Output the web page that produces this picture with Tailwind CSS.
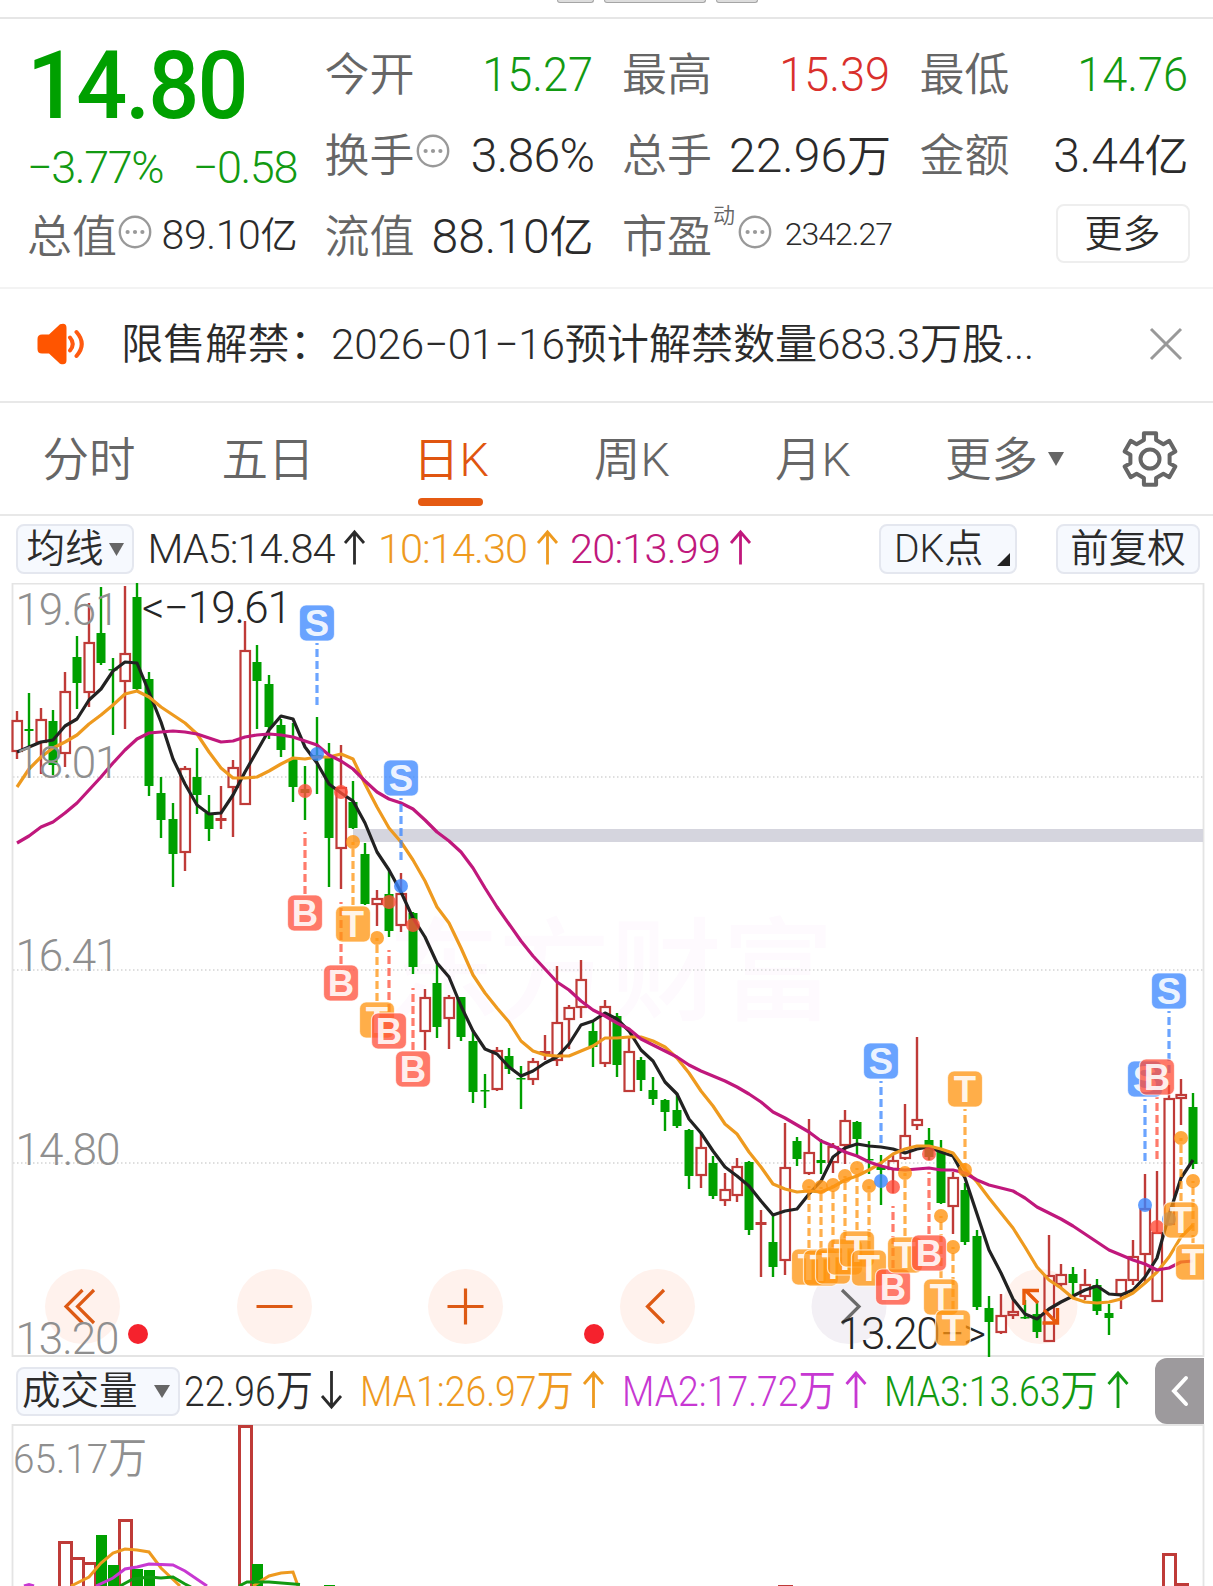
<!DOCTYPE html>
<html lang="zh-CN">
<head>
  <meta charset="UTF-8" />
  <title>日K</title>
  <script src="https://cdn.jsdelivr.net/npm/@tailwindcss/browser@4"></script>
</head>
<body class="bg-white w-[1213px] h-[1586px] overflow-hidden font-['Roboto','Noto_Sans_CJK_SC',sans-serif] font-[350] text-[#2b2b2b]">
  <!-- bottom edge of the index chips -->
  <div class="h-[19px] border-b-2 border-[#e6e6e6] flex gap-[10px] pl-[557px] overflow-hidden">
    <div class="w-[37px] h-[3px] rounded-b-md bg-[#dddddd] border border-t-0 border-[#a5a5a5]"></div>
    <div class="w-[102px] h-[3px] rounded-b-md bg-[#dddddd] border border-t-0 border-[#a5a5a5]"></div>
    <div class="w-[42px] h-[3px] rounded-b-md bg-[#dddddd] border border-t-0 border-[#a5a5a5]"></div>
  </div>

  <!-- quote header -->
  <section class="h-[270px] border-b-2 border-[#f3f3f3] pt-[14px] pl-[27px] grid grid-cols-[repeat(4,270px)] grid-rows-[repeat(3,81px)] gap-x-[27.5px] items-center whitespace-nowrap leading-none">
    <div class="row-span-2 h-full text-[#00a000]">
      <div class="pt-[5px] text-[95px] font-medium tracking-[-2px] origin-left scale-x-[0.945]">14.80</div>
      <div class="mt-[12px] flex justify-between text-[45px] tracking-[-1.4px] text-[#129a12]"><span>−3.77%</span><span>−0.58</span></div>
    </div>
    <div class="flex justify-between items-center"><span class="pt-[4px] text-[45px] text-[#666]">今开</span><span class="text-[48px] origin-right scale-x-[0.94] pr-[2px] pt-[2px] text-[#129a12]">15.27</span></div>
    <div class="flex justify-between items-center"><span class="pt-[4px] text-[45px] text-[#666]">最高</span><span class="text-[48px] origin-right scale-x-[0.94] pr-[2px] pt-[2px] text-[#d9302c]">15.39</span></div>
    <div class="flex justify-between items-center"><span class="pt-[4px] text-[45px] text-[#666]">最低</span><span class="text-[48px] origin-right scale-x-[0.94] pr-[2px] pt-[2px] text-[#129a12]">14.76</span></div>

    <div class="flex justify-between items-center">
      <span class="pt-[4px] flex items-center text-[45px] text-[#666]">换手
        <svg class="w-[36px] h-[36px] -mt-[12px]" viewBox="0 0 36 36"><circle cx="18" cy="18" r="15.2" fill="none" stroke="#999" stroke-width="2.4"/><g fill="#999"><circle cx="10.6" cy="18" r="2.1"/><circle cx="18" cy="18" r="2.1"/><circle cx="25.4" cy="18" r="2.1"/></g></svg></span>
      <span class="text-[48px] pt-[2px] tracking-[-0.6px]">3.86%</span>
    </div>
    <div class="flex justify-between items-center"><span class="pt-[4px] text-[45px] text-[#666]">总手</span><span class="text-[48px] pr-px pt-[2px]">22.96<span class="text-[44px]">万</span></span></div>
    <div class="flex justify-between items-center"><span class="pt-[4px] text-[45px] text-[#666]">金额</span><span class="text-[48px] pr-px pt-[2px]">3.44<span class="text-[44px]">亿</span></span></div>

    <div class="flex justify-between items-center">
      <span class="pt-[4px] flex items-center text-[45px] text-[#666]">总值
        <svg class="w-[36px] h-[36px] -mt-[12px]" viewBox="0 0 36 36"><circle cx="18" cy="18" r="15.2" fill="none" stroke="#999" stroke-width="2.4"/><g fill="#999"><circle cx="10.6" cy="18" r="2.1"/><circle cx="18" cy="18" r="2.1"/><circle cx="25.4" cy="18" r="2.1"/></g></svg></span>
      <span class="text-[41px] tracking-[-0.4px]">89.10<span class="text-[37px]">亿</span></span>
    </div>
    <div class="flex justify-between items-center"><span class="pt-[4px] text-[45px] text-[#666]">流值</span><span class="text-[48px] pr-px pt-[2px]">88.10<span class="text-[44px]">亿</span></span></div>
    <div class="flex justify-between items-center">
      <span class="pt-[4px] flex items-center text-[45px] text-[#666]">市盈<span class="ml-px text-[22px] -mt-[44px]">动</span>
        <svg class="ml-[2px] w-[36px] h-[36px] -mt-[12px]" viewBox="0 0 36 36"><circle cx="18" cy="18" r="15.2" fill="none" stroke="#999" stroke-width="2.4"/><g fill="#999"><circle cx="10.6" cy="18" r="2.1"/><circle cx="18" cy="18" r="2.1"/><circle cx="25.4" cy="18" r="2.1"/></g></svg></span>
      <span class="text-[32px] -mt-[3px] tracking-[-1px]">2342.27</span>
    </div>
    <button class="justify-self-end w-[134px] h-[59px] -mt-[4px] border-2 border-[#eeeeee] rounded-lg text-[38px] font-[350] leading-none">更多</button>
  </section>

  <!-- announcement -->
  <section class="h-[114px] border-b-2 border-[#e8e8e8] flex items-center pl-[36px] pr-[30px] pb-[2px] whitespace-nowrap leading-none">
    <svg class="w-[50px] h-[42px]" viewBox="36 323 50 42"><path d="M42 334.500h7l11-10.300q6.500-2 6.500 3.500v32.500q0 5.500-6.500 3.500l-11-10.200h-7q-4.500 0-4.500-4.500v-10q0-4.500 4.500-4.500z" fill="#ff5500"/><path d="M70 337.500q5.500 6.500 0 13M76.500 332q10.500 12 0 24" fill="none" stroke="#ff5a10" stroke-width="4" stroke-linecap="round"/></svg>
    <span class="ml-[35px] pt-[2px] text-[42.2px]">限售解禁：</span><span class="pt-[2px] -ml-px text-[42.2px] tracking-[-0.15px]">2026−01−16预计解禁数量683.3万股...</span>
    <svg class="ml-auto w-[34px] h-[34px]" viewBox="0 0 34 34"><path d="M2 2l30 30M32 2L2 32" stroke="#999" stroke-width="3" fill="none"/></svg>
  </section>

  <!-- period tabs -->
  <nav class="h-[113px] border-b-2 border-[#e8e8e8] flex items-center whitespace-nowrap leading-none text-[46.5px] text-[#666]">
    <span class="pt-[4px] w-[178px] text-center">分时</span>
    <span class="pt-[4px] w-[180px] text-center">五日</span>
    <span class="relative pt-[4px] w-[186px] text-center text-[#e05510]">日K<i class="absolute left-[60px] top-[65px] w-[65px] h-[8px] rounded-full bg-[#e55a12]"></i></span>
    <span class="pt-[4px] w-[176px] text-center">周K</span>
    <span class="pt-[4px] w-[186px] text-center">月K</span>
    <span class="pt-[4px] ml-[39px]">更多</span>
    <svg class="ml-[10px] w-[16px] h-[14px]" viewBox="0 0 16 14"><path d="M0 0h16L8 14z" fill="#666"/></svg>
    <svg class="ml-[56px] w-[60px] h-[60px]" viewBox="-30 -30 60 60" fill="none" stroke="#666" stroke-width="4"><path id="gear" stroke-linejoin="round"/><circle r="9.500"/></svg>
  </nav>

  <!-- moving averages row -->
  <section class="h-[67px] flex items-center pl-[16px] pb-px whitespace-nowrap leading-none text-[41px]">
    <button class="w-[118px] h-[50px] flex items-center justify-center gap-[5px] rounded-lg border-2 border-[#e4e7ef] bg-[#f6f9fe] text-[38.500px] font-[350]">均线<svg class="w-[15px] h-[13px]" viewBox="0 0 15 13"><path d="M0 0h15L7.500 13z" fill="#666"/></svg></button>
    <svg class="w-[620px] h-[60px] ml-[14px]" viewBox="148 520 620 60">
      <g font-size="41.500">
        <text x="147.500" y="563.500" textLength="188" fill="#2b2b2b">MA5:14.84</text>
        <text x="378" y="563.500" textLength="150" fill="#ee9a1f">10:14.30</text>
        <text x="570" y="563.500" textLength="151" fill="#c0187c">20:13.99</text>
      </g>
      <g fill="none" stroke-width="2.800"><path d="M354.500 565.500v-32M345 544l9.500-11 9.500 11" stroke="#2b2b2b"/><path d="M547.500 565.500v-32M538 544l9.500-11 9.500 11" stroke="#ee9a1f"/><path d="M740.500 565.500v-32M731 544l9.500-11 9.500 11" stroke="#c0187c"/></g>
    </svg>
    <button class="ml-[111px] w-[138px] h-[50px] relative rounded-lg border-2 border-[#e4e7ef] bg-[#f6f9fe] text-[39px] font-[350] text-left pl-[13px] leading-none">DK点<svg class="absolute right-[5px] bottom-[6px] w-[13px] h-[13px]" viewBox="0 0 13 13"><path d="M13 0v13H0z" fill="#222"/></svg></button>
    <button class="ml-[39px] w-[144px] h-[50px] rounded-lg border-2 border-[#e4e7ef] bg-[#f6f9fe] text-[38.500px] font-[350] leading-none">前复权</button>
  </section>

  <svg id="kline" class="block w-[1213px] h-[775px]" viewBox="0 583 1213 775"></svg>

  <!-- volume row -->
  <section class="h-[66px] flex items-center pl-[16px] whitespace-nowrap leading-none">
    <button class="w-[164px] h-[49px] flex items-center pl-[4px] rounded-lg border-2 border-[#e4e7ef] bg-[#f6f9fe] text-[38.500px] font-[350]">成交量<svg class="ml-[16px] w-[16px] h-[13px]" viewBox="0 0 16 13"><path d="M0 0h16L8 13z" fill="#666"/></svg></button>
    <svg class="w-[975px] h-[66px]" viewBox="180 1358 975 66">
      <g font-size="43">
        <text x="184" y="1406" textLength="129" lengthAdjust="spacingAndGlyphs" fill="#2b2b2b">22.96万</text>
        <text x="360" y="1406" textLength="214" lengthAdjust="spacingAndGlyphs" fill="#ee9a1f">MA1:26.97万</text>
        <text x="622" y="1406" textLength="214" lengthAdjust="spacingAndGlyphs" fill="#c738d2">MA2:17.72万</text>
        <text x="884" y="1406" textLength="214" lengthAdjust="spacingAndGlyphs" fill="#129a12">MA3:13.63万</text>
      </g>
      <g fill="none" stroke-width="2.800"><path d="M331.500 1371v35M322 1396l9.500 11 9.500-11" stroke="#2b2b2b"/><path d="M593.500 1408v-35M584 1384l9.500-11 9.500 11" stroke="#ee9a1f"/><path d="M856 1408v-35M846.500 1384l9.500-11 9.500 11" stroke="#c738d2"/><path d="M1118 1408v-35M1108.500 1384l9.500-11 9.500 11" stroke="#129a12"/></g>
    </svg>
    <div class="w-[49px] h-[66px] rounded-l-xl bg-[#9d9a9d] flex items-center pl-[15px]"><svg class="w-[20px] h-[32px]" viewBox="0 0 20 32"><path d="M16 3L4 16l12 13" fill="none" stroke="#fff" stroke-width="4" stroke-linecap="round"/></svg></div>
  </section>

  <svg id="volume" class="block w-[1213px] h-[162px]" viewBox="0 1424 1213 162"></svg>

  <script>
    const RED = "#bf3b38", GREEN = "#00a000";
    const X = i => 17 + 12 * i;

    // direction, high, low, body top, body bottom
    const candles = [
      ["r",711,759,720,752],["g",693,747,729,731],["r",708,774,719,743],["g",710,775,721,765],["r",672,767,691,754],
      ["g",636,709,657,683],["r",603,707,642,693],["g",587,665,633,663],["g",658,735,669,670],["r",586,729,653,682],
      ["g",583,690,597,689],["g",672,796,679,786],["g",777,838,793,820],["g",803,887,819,854],["r",766,871,768,853],
      ["g",748,814,777,795],["g",795,841,813,829],["r",786,829,818,821],["r",760,837,767,788],["r",621,805,650,805],
      ["g",645,729,662,681],["g",675,739,684,727],["g",719,757,725,750],["g",723,802,759,787],["g",766,820,789,793],
      ["g",717,794,755,756],["g",743,887,758,838],["r",745,889,787,849],["g",781,829,802,828],["g",843,905,854,904],
      ["r",890,926,898,905],["g",871,937,894,931],["r",873,932,893,926],["g",912,974,913,967],["r",989,1050,997,1032],
      ["g",963,1038,983,1027],["r",995,1049,997,1019],["g",997,1041,997,1037],["g",1030,1103,1041,1092],["g",1074,1108,1090,1091],
      ["r",1047,1091,1050,1090],["g",1048,1074,1056,1069],["g",1066,1109,1078,1079],["r",1058,1085,1061,1080],["r",1035,1060,1051,1054],
      ["r",966,1066,1022,1061],["r",1005,1049,1007,1020],["r",960,1018,979,1008],["g",1022,1067,1031,1047],["r",1000,1067,1006,1064],
      ["g",1013,1077,1016,1065],["r",1038,1092,1051,1092],["g",1057,1091,1060,1080],["g",1077,1105,1090,1099],["g",1099,1131,1100,1112],
      ["g",1093,1128,1110,1126],["g",1129,1189,1130,1176],["r",1133,1188,1147,1176],["g",1156,1199,1163,1196],["r",1173,1206,1189,1201],
      ["r",1158,1202,1166,1196],["g",1161,1235,1162,1230],["r",1210,1277,1222,1225],["g",1215,1277,1242,1267],["r",1123,1275,1167,1261],
      ["g",1137,1166,1141,1159],["r",1119,1175,1152,1174],["g",1139,1174,1160,1163],["r",1143,1173,1146,1163],["r",1110,1164,1120,1146],
      ["g",1121,1155,1122,1139],["g",1141,1174,1159,1160],["g",1155,1205,1166,1170],["r",1155,1193,1160,1170],["r",1104,1160,1135,1159],
      ["r",1037,1130,1119,1126],["g",1128,1160,1140,1157],["g",1140,1204,1150,1203],["r",1172,1234,1177,1207],["g",1183,1245,1190,1242],
      ["g",1230,1310,1236,1307],["g",1296,1357,1308,1322],["r",1294,1334,1315,1333],["r",1300,1319,1311,1316],["g",1300,1319,1317,1318],
      ["g",1302,1338,1314,1332],["r",1235,1342,1275,1342],["r",1264,1288,1274,1285],["g",1267,1297,1274,1283],["r",1269,1300,1284,1297],
      ["g",1279,1315,1285,1311],["g",1304,1335,1313,1318],["r",1279,1309,1279,1295],["r",1240,1285,1256,1281],["r",1174,1282,1208,1255],
      ["r",1171,1302,1232,1302],["r",1085,1225,1098,1225],["r",1079,1125,1094,1099],["g",1093,1169,1107,1164]
    ];
    const ma5 = [752,747,742,740,726,719,700,689,671,662,663,692,722,759,784,805,814,813,795,772,751,730,716,719,747,763,784,793,801,823,852,870,892,918,937,963,977,1006,1031,1049,1054,1067,1076,1071,1063,1057,1044,1025,1021,1013,1019,1031,1050,1061,1082,1094,1119,1133,1151,1167,1176,1186,1201,1215,1211,1209,1194,1181,1157,1148,1144,1146,1147,1149,1153,1149,1147,1152,1156,1178,1214,1250,1273,1299,1314,1319,1309,1302,1296,1290,1286,1294,1295,1290,1277,1258,1215,1178,1160];
    const ma10 = [787,769,757,748,742,735,724,715,705,694,691,697,707,715,723,734,752,768,778,778,777,771,764,758,759,757,757,754,759,784,807,828,842,860,881,907,923,948,975,993,1008,1022,1041,1051,1055,1056,1056,1051,1046,1038,1038,1037,1037,1041,1047,1058,1073,1091,1106,1124,1134,1152,1167,1184,1189,1192,1191,1192,1187,1180,1176,1170,1163,1154,1149,1146,1146,1149,1153,1169,1182,1198,1213,1228,1247,1267,1280,1288,1298,1302,1303,1302,1299,1293,1283,1272,1257,1237,1225];
    const ma20 = [843,836,827,822,813,803,790,777,763,750,739,733,732,731,732,734,738,742,741,737,735,734,735,737,741,745,755,761,769,781,792,799,803,809,820,832,841,852,868,888,907,924,941,956,969,982,990,1001,1010,1016,1023,1029,1039,1045,1051,1057,1065,1071,1076,1081,1087,1094,1102,1112,1118,1125,1132,1141,1146,1152,1156,1162,1166,1169,1170,1169,1168,1170,1170,1173,1180,1185,1188,1191,1198,1207,1213,1219,1226,1234,1242,1250,1255,1260,1264,1270,1268,1262,1261];

    // letter, candle index, badge centre, dot centre
    const marks = [
      ["S",25,623,754],["S",32,778,886],["B",24,913,791],["T",28,924,842],["B",27,983,792],["T",30,1020,938],["B",31,1031,902],["B",33,1069,925],
      ["T",66,1267,1186],["T",67,1268,1187],["T",68,1266,1185],["T",69,1257,1176],["T",70,1249,1168],["T",71,1268,1186],
      ["S",72,1061,1181],["B",73,1287,1187],["T",74,1255,1173],["B",76,1253,1154],["T",77,1297,1216],["T",78,1328,1247],["T",79,1089,1170],
      ["S",94,1079,1205],["S",96,991,1219],["B",95,1077,1227],["T",97,1220,1138],["T",98,1262,1181]
    ];
    const tone = { S: "#3a86ff", B: "#ff4f3a", T: "#ff9410" };

    const line = (d, c) => `<polyline points="${d.map((y, i) => X(i) + "," + y).join(" ")}" fill="none" stroke="${c}" stroke-width="3.200" stroke-linejoin="round"/>`;

    let s = "";
    s += `<g fill="#fefafe" font-size="112" font-weight="500"><text x="388 498 610 722" y="1012">东方财富</text></g>`;
    s += `<path d="M13 777H1203M13 970H1203M13 1163H1203" stroke="#d4d4d4" stroke-width="1.300" stroke-dasharray="1.500 2.500"/>`;
    s += `<path d="M12.500 583.500H1203.500V1356H12.500z" fill="none" stroke="#e4e4e4" stroke-width="1.800"/>`;
    s += `<rect x="353" y="829" width="850" height="13" fill="#d5d5de"/>`;

    // round tool buttons
    for (const x of [82.5, 274.5, 465.5, 657.5, 1040]) s += `<circle cx="${x}" cy="1306.500" r="37.500" fill="#fff2ed"/>`;
    s += `<circle cx="849" cy="1306.500" r="37.500" fill="#f3f0f5"/>`;
    s += `<g fill="none" stroke="#dd5a14" stroke-width="3.200"><path d="M82.500 1290L66 1306.500 82.500 1323M94 1290l-16.500 16.500L94 1323M256.500 1306.500h36M447.500 1306.500h36M465.500 1288.500v36M664 1290l-16.500 16.500L664 1323"/></g>`;
    s += `<path d="M842 1290l17 16.500-17 17" fill="none" stroke="#6b6b6b" stroke-width="3.200"/>`;

    candles.forEach(([k, hi, lo, t, b], i) => {
      const x = X(i);
      if (k === "g") {
        s += `<path d="M${x} ${hi}V${lo}" stroke="${GREEN}" stroke-width="2.400"/><rect x="${x - 4.5}" y="${t}" width="9" height="${Math.max(b - t, 1.5)}" fill="${GREEN}"/>`;
      } else if (b - t < 4) {
        s += `<path d="M${x} ${hi}V${lo}" stroke="${RED}" stroke-width="2.400"/><rect x="${x - 5.5}" y="${t}" width="11" height="${b - t}" fill="${RED}"/>`;
      } else {
        s += `<path d="M${x} ${hi}V${t}M${x} ${b}V${lo}" stroke="${RED}" stroke-width="2.400"/><rect x="${x - 4.5}" y="${t + 1}" width="9.500" height="${b - t - 2}" fill="none" stroke="${RED}" stroke-width="2.200"/>`;
      }
    });
    s += line(ma5, "#222") + line(ma10, "#ee9a1f") + line(ma20, "#c0187c");
    s += `<path d="M1038 1303l-13-13M1024 1305v-14.500h15M1044 1310l13 13M1057.500 1308v15h-15" fill="none" stroke="#e8590c" stroke-width="3.400"/>`;

    s += `<g fill="#8f8f8f" font-size="44"><text x="15.500" y="625" textLength="104">19.61</text><text x="15.500" y="778" textLength="104">18.01</text><text x="15.500" y="971" textLength="104">16.41</text><text x="15.500" y="1165" textLength="105">14.80</text><text x="15.500" y="1354" textLength="104">13.20</text></g>`;
    s += `<g fill="#262626" font-size="44"><text x="142" y="622.500" textLength="150">&lt;−19.61</text><text x="838" y="1348.500" textLength="148">13.20−&gt;</text></g>`;
    s += `<g fill="#f5222d"><circle cx="138" cy="1334" r="10"/><circle cx="594" cy="1334" r="10"/></g>`;

    s += `<clipPath id="frame"><rect x="0" y="583" width="1204" height="775"/></clipPath><g clip-path="url(#frame)">`;
    marks.forEach(([l, i, cy, dot]) => {
      const x = X(i), c = tone[l];
      const up = l === "S" || i === 79 || i === 95;
      const y1 = up ? cy + 20 : (l === "T" ? dot : cy - 81), y2 = up ? cy + 82 : cy - 19;
      s += `<path d="M${x} ${y2}V${y1}" stroke="${c}" stroke-opacity=".75" stroke-width="3.200" stroke-dasharray="8 4"/>`;
      s += `<circle cx="${x}" cy="${dot}" r="7" fill="${c}" fill-opacity=".8"/>`;
    });
    marks.forEach(([l, i, cy]) => {
      const x = X(i);
      s += `<rect x="${x - 17.5}" y="${cy - 18}" width="35" height="36" rx="6.500" fill="${tone[l]}" fill-opacity=".76" stroke="#fff" stroke-opacity=".7" stroke-width="1.200"/>`;
      s += `<text x="${x}" y="${cy + 12.5}" font-size="36.500" font-family="Liberation Sans" font-weight="700" text-anchor="middle" fill="#fff" fill-opacity=".9">${l}</text>`;
    });
    s += `</g>`;
    document.getElementById("kline").innerHTML = s;

    // volume pane
    let v = `<path d="M12.500 1590V1425H1203.500V1590" fill="none" stroke="#e4e4e4" stroke-width="1.800"/>`;
    v += `<text x="13" y="1473" font-size="41.500" textLength="134" lengthAdjust="spacingAndGlyphs" fill="#8f8f8f">65.17万</text>`;
    [[4,1541],[5,1557],[6,1562],[9,1519],[19,1425],[64,1585],[96,1553],[97,1583]].forEach(([i, t]) => {
      v += `<rect x="${X(i) - 5.500}" y="${t + 1.5}" width="12" height="180" fill="#fff" stroke="${RED}" stroke-width="3"/>`;
    });
    [[7,1535],[8,1565],[10,1569],[11,1570],[20,1564],[26,1585]].forEach(([i, t]) => {
      v += `<rect x="${X(i) - 5}" y="${t}" width="11" height="180" fill="${GREEN}"/>`;
    });
    v += `<g fill="none" stroke-width="3"><path d="M71 1586L89 1577 101 1563 113 1553 125 1549 137 1550 149 1552 161 1568 180 1586M253 1586L269 1576 281 1573 293 1572 298 1586" stroke="#ee9a1f"/><path d="M24 1586L29 1584.500 34 1586M96 1586L113 1578 125 1569 137 1567 149 1564 173 1565 185 1571 207 1586" stroke="#c738d2"/><path d="M120 1586L133 1579 149 1577 161 1578 173 1577 185 1584 191 1587M239 1586L247 1582 269 1582 300 1584.500" stroke="#129a12"/></g>`;
    document.getElementById("volume").innerHTML = v;

    // gear outline: six teeth
    let d = "";
    for (let k = 0; k < 6; k++) {
      [[-21, 20], [-14, 26.5], [14, 26.5], [21, 20]].forEach(([a, r], n) => {
        const q = (k * 60 + a * (n % 3 ? .95 : .85)) * Math.PI / 180;
        d += (d ? "L" : "M") + (r * Math.sin(q)).toFixed(1) + " " + (-r * Math.cos(q)).toFixed(1);
      });
    }
    document.getElementById("gear").setAttribute("d", d + "Z");
  </script>
</body>
</html>
